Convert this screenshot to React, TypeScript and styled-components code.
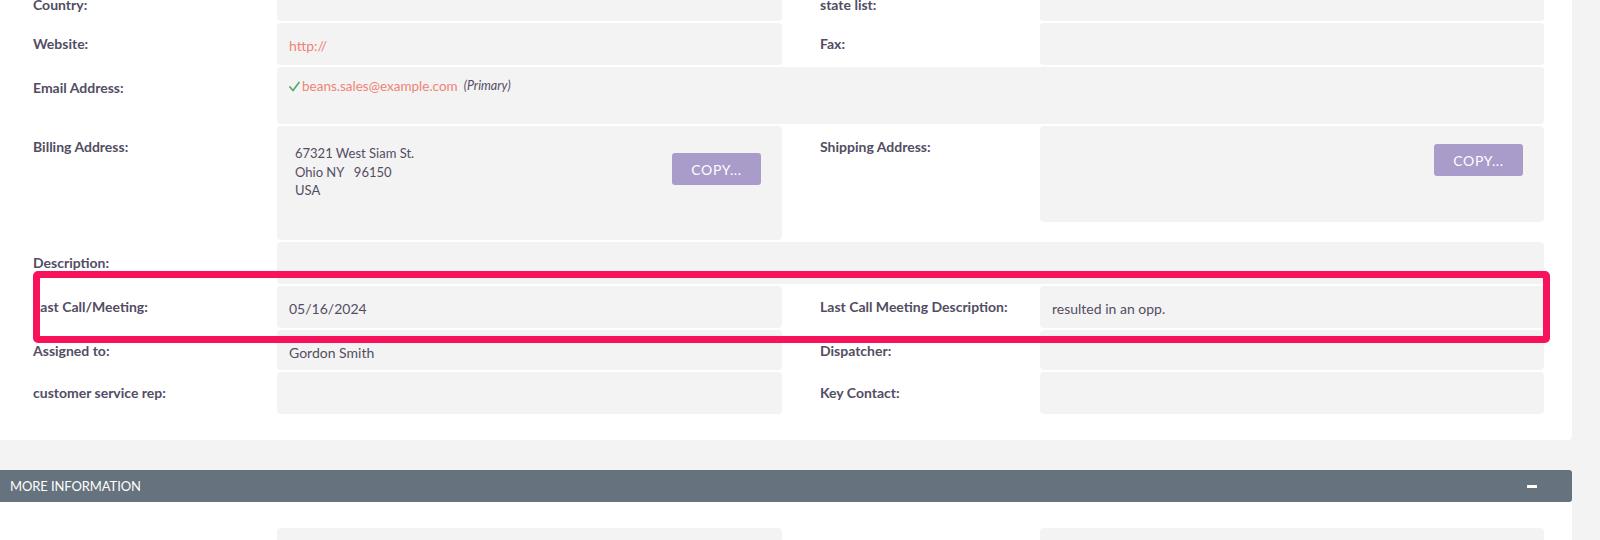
import { createGlobalStyle, styled } from 'styled-components';

const GlobalStyle = createGlobalStyle`
  html, body {
    margin: 0;
    padding: 0;
    background: #f3f3f3;
    font-family: Lato, "Open Sans", "Liberation Sans", sans-serif;
    color: #534d64;
  }
  #root {
    height: 540px;
    overflow: hidden;
  }
`;

type Field = {
  label: string;
  value?: React.ReactNode;
};

const Check = () => (
  <svg width="11" height="11" viewBox="0 0 11 11" aria-hidden>
    <polyline points="1,6 4,9.5 10,1.5" fill="none" stroke="#58a86b" strokeWidth="1.7" strokeLinecap="round" strokeLinejoin="round" />
  </svg>
);

const App = () => {
  const pairs: [Field, Field, number][] = [
    [{ label: 'Country:' }, { label: 'state list:' }, 37],
    [{ label: 'Website:', value: <Link>http://</Link> }, { label: 'Fax:' }, 42],
  ];
  const bottomPairs: [Field, Field, number][] = [
    [
      { label: 'Last Call/Meeting:', value: '05/16/2024' },
      { label: 'Last Call Meeting Description:', value: 'resulted in an opp.' },
      42,
    ],
    [{ label: 'Assigned to:', value: 'Gordon Smith' }, { label: 'Dispatcher:' }, 40],
    [{ label: 'customer service rep:' }, { label: 'Key Contact:' }, 42],
  ];

  return (
    <>
      <GlobalStyle />
      <Page>
        <Panel>
          <FieldGrid>
            {pairs.map(([l, r, h]) => (
              <Pair key={l.label} left={l} right={r} h={h} />
            ))}

            <Label>Email Address:</Label>
            <Value $span $h={57} $pt={10}>
              <EmailLine>
                <Check />
                <Link>beans.sales@example.com</Link>
                <em>(Primary)</em>
              </EmailLine>
            </Value>

            <Label>Billing Address:</Label>
            <Value $h={114} $pt={18}>
              <AddressBox>
                <Address>
                  67321 West Siam St.
                  <br />
                  Ohio NY&nbsp;&nbsp; 96150
                  <br />
                  USA
                </Address>
                <CopyButton $offset={9}>COPY...</CopyButton>
              </AddressBox>
            </Value>
            <Label $right>Shipping Address:</Label>
            <Value $h={96} $pt={18}>
              <AddressBox>
                <Address />
                <CopyButton>COPY...</CopyButton>
              </AddressBox>
            </Value>

            <Label>Description:</Label>
            <Value $span />

            {bottomPairs.map(([l, r, h]) => (
              <Pair key={l.label} left={l} right={r} h={h} />
            ))}
          </FieldGrid>
          <Highlight />
        </Panel>

        <SectionHeader>
          <span>MORE INFORMATION</span>
          <Minus />
        </SectionHeader>

        <LowerPanel>
          <FieldGrid>
            <Label />
            <Value />
            <Label $right />
            <Value />
          </FieldGrid>
        </LowerPanel>
      </Page>
    </>
  );
};

const Pair = ({ left, right, h = 42 }: { left: Field; right: Field; h?: number }) => (
  <>
    <Label>{left.label}</Label>
    <Value $h={h}>{left.value}</Value>
    <Label $right>{right.label}</Label>
    <Value $h={h}>{right.value}</Value>
  </>
);

const Page = styled.div`
  display: flex;
  flex-direction: column;
  gap: 30px;
  padding-right: 28px;
`;

const Panel = styled.div`
  position: relative;
  margin-top: -16px;
  background: #fff;
  border-radius: 0 0 4px 0;
  padding-bottom: 26px;
`;

const FieldGrid = styled.div`
  display: grid;
  grid-template-columns: 277px 505px 258px 504px;
  row-gap: 2px;
  align-items: start;
`;

const Label = styled.div<{ $right?: boolean }>`
  padding: 12px 0 0 ${p => (p.$right ? 38 : 33)}px;
  font-size: 14px;
  line-height: 18px;
  font-weight: 700;
  color: #534d64;
`;

const Value = styled.div<{ $span?: boolean; $h?: number; $pt?: number }>`
  grid-column: ${p => (p.$span ? 'span 3' : 'auto')};
  box-sizing: border-box;
  height: ${p => p.$h ?? 42}px;
  padding: ${p => p.$pt ?? 14}px 12px 0 12px;
  background: #f3f3f3;
  border-radius: 4px;
  font-size: 14px;
  line-height: 18px;
  color: #534d64;
`;

const Link = styled.span`
  color: #f08377;
`;

const EmailLine = styled.div`
  display: flex;
  align-items: center;
  gap: 2px;
  font-size: 13.5px;
  svg {
    margin-top: 1px;
  }
  em {
    margin-left: 4px;
    font-size: 12.5px;
    color: #534d64;
  }
`;

const AddressBox = styled.div`
  display: flex;
  justify-content: space-between;
  align-items: flex-start;
  padding-right: 9px;
`;

const Address = styled.div`
  padding-left: 6px;
  font-size: 13px;
  line-height: 18.5px;
`;

const CopyButton = styled.button<{ $offset?: number }>`
  margin-top: ${p => p.$offset ?? 0}px;
  width: 89px;
  height: 32px;
  border: none;
  border-radius: 3px;
  background: #a99bca;
  color: #fff;
  font-family: Lato, "Open Sans", sans-serif;
  font-size: 14px;
  letter-spacing: 0.6px;
  cursor: pointer;
`;

const Highlight = styled.div`
  position: absolute;
  left: 33px;
  top: 287px;
  width: 1517px;
  height: 72px;
  box-sizing: border-box;
  border: 7px solid #f7125b;
  border-radius: 5px;
  pointer-events: none;
`;

const SectionHeader = styled.div`
  display: flex;
  align-items: center;
  justify-content: space-between;
  height: 32px;
  padding: 0 35px 0 10px;
  background: #66727e;
  border-radius: 0 3px 3px 0;
  color: #fff;
  font-size: 13px;
  letter-spacing: -0.1px;
`;

const Minus = styled.span`
  width: 10px;
  height: 3px;
  background: #fff;
`;

const LowerPanel = styled.div`
  margin-top: -30px;
  padding-top: 26px;
  background: #fff;
  height: 200px;
`;

export default App;
